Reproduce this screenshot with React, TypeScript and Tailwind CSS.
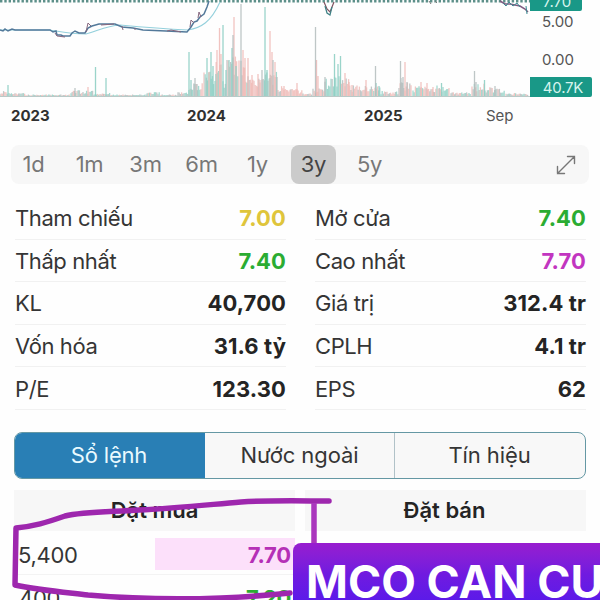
const TEAL = "#8fcfc4";
const ROSE = "#efb9b5";
const GREY = "#b3bcbc";

// [x, top] pairs of the tall volume bars, grouped by colour
const tealSpikes = [
  [8, 85], [95.5, 67], [106, 78], [189, 52], [191, 80], [207, 58], [211, 52], [213, 66], [216, 74], [223, 25],
  [226, 70], [229, 60], [232, 48], [236, 66], [265, 7], [267, 70], [270, 78], [334.5, 54], [338, 64], [340.5, 56],
  [376, 83], [379, 86], [441.5, 83], [484.5, 80],
];
const roseSpikes = [
  [88, 87], [209, 72], [217, 50], [219.5, 28], [221, 54], [234, 17], [243, 50], [245, 58], [248, 58], [252, 75],
  [258, 74], [260, 80], [270, 31], [272, 52], [275, 62], [284, 86], [297, 83], [316.5, 60], [318, 76], [345, 73],
  [349, 82], [352, 85], [366, 80], [366, 88], [421, 82], [427, 83], [433, 87], [405, 62],
];
const greySpikes = [
  [75, 88], [195, 78], [197, 84], [241, 4], [233, 35], [262, 70], [273, 60], [277, 77], [315.5, 27], [325, 77],
  [375.5, 66], [400.5, 61], [401, 78], [403, 77], [474.5, 71], [476, 82], [495, 86], [407, 82],
];

// lower volume: [from, to, height]
const ranges: [number, number, number][] = [
  [0, 8, 5], [9, 25, 3], [26, 70, 1.5], [71, 93, 6], [94, 110, 3], [111, 145, 1.5], [146, 160, 4], [161, 177, 1.5],
  [178, 188, 4], [189, 203, 13], [204, 214, 32], [215, 222, 38], [223, 226, 20], [227, 240, 46], [241, 247, 36],
  [248, 261, 20], [262, 277, 26], [278, 290, 11], [291, 302, 7], [303, 312, 3], [313, 324, 8], [325, 338, 20],
  [339, 350, 22], [351, 368, 11], [369, 380, 10], [381, 398, 5], [399, 412, 14], [413, 450, 11],
  [451, 471, 4], [472, 484, 13], [485, 505, 9], [506, 528, 3],
];

const noise = (x: number) => {
  const s = Math.sin(x * 12.9898) * 43758.5453;
  return s - Math.floor(s);
};

// the early 2024 rally is mostly green volume, what follows is mostly red
const tint = (x: number) => {
  const n = noise(x * 3.1);
  if (x > 203 && x < 241) return n < 0.65 ? TEAL : n < 0.85 ? GREY : ROSE;
  if ((x > 247 && x < 262) || (x > 277 && x < 325) || (x > 340 && x < 368)) return n < 0.7 ? ROSE : GREY;
  if (x > 324 && x < 341) return n < 0.7 ? TEAL : GREY;
  return [TEAL, ROSE, GREY][Math.floor(n * 3)];
};

const lowBars = ranges.flatMap(([from, to, h], i) => {
  const bars = [];
  for (let x = from; x <= to; x += 1.2) {
    bars.push({ x, h: h * (0.35 + 0.65 * noise(x + i)), color: tint(x) });
  }
  return bars;
});

const spikePath = (list: number[][]) => list.map(([x, y]) => `M${x} 96V${y}`).join("");

const PriceChart = () => (
  <svg width="530" height="98" viewBox="0 0 530 98" fill="none" className="block shrink-0">
    {lowBars.map((b, i) => (
      <path key={i} d={`M${b.x} 96v${-b.h}`} stroke={b.color} strokeWidth="1.3" opacity="0.8" />
    ))}
    <path d={spikePath(tealSpikes)} stroke={TEAL} strokeWidth="1.3" opacity="0.9" />
    <path d={spikePath(roseSpikes)} stroke={ROSE} strokeWidth="1.3" opacity="0.85" />
    <path d={spikePath(greySpikes)} stroke={GREY} strokeWidth="1.3" opacity="0.85" />
    <path d="M0 96.5H530" stroke="#b9c9c7" />
    <path d="M0 1.2H530" stroke="#5c8f89" strokeWidth="2.4" strokeDasharray="2.4 1.9" />
    <path
      d="M0 30L50 30C62 32 70 34 86 34C98 31 105 26 120 25C142 27 168 29 188 30C201 28 211 22 220 2"
      stroke="#94d0dc"
      strokeWidth="1.1"
    />
    <path
      d="M0 30L3 31L5 29L8 31L12 29L15 30L50 30L53 32L56 31L57 35L61 35L63 36L70 36L72 33L75 31L79 33L85 33L88 28L92 26L99 24L115 24L122 27L133 28L143 30L166 31L187 32L191 27L194 22L197 21L200 17L204 14L207 7L209 1"
      stroke="#53799a"
      strokeWidth="1.5"
    />
    <path
      d="M55 33L57 36L65 37M86 32L88 23L91 26M101 25L114 24M122 26L123 30M135 28V30M167 31L171 30L181 32M190 27L191 20L194 23M198 18L199 12L201 17"
      stroke="#86677e"
    />
    <path d="M324 2L327 9L330 12L334 2" stroke="#80525f" strokeWidth="1.2" />
    <path d="M325 6L327 13L330 15L332 7" stroke="#3d8084" strokeWidth="1.2" />
    <path d="M429 1L431 4M435 1L437 3" stroke="#777" />
    <path d="M500 1L505 4L510 4L515 5L520 6L525 9L528 12" stroke="#825a80" strokeWidth="1.5" />
    <path d="M503 3L506 6L509 2L513 6L517 3L520 7M526 6L527 14" stroke="#3b8a92" />
  </svg>
);

const ExpandIcon = () => (
  <svg width="20" height="20" viewBox="0 0 20 20" fill="none" stroke="#777" strokeWidth="1.4" strokeLinecap="round">
    <path d="M1.5 18.5L18.5 1.5M11.5 1.5H18.5V8.5M1.5 11.5V18.5H8.5" />
  </svg>
);

const periods = [
  { label: "1d", box: "w-[44px]" },
  { label: "1m", box: "w-[68px]" },
  { label: "3m", box: "w-[44px]" },
  { label: "6m", box: "w-[68px]" },
  { label: "1y", box: "w-[44px]" },
];

type Stat = { label: string; value: string; color?: string };

const left: Stat[] = [
  { label: "Tham chiếu", value: "7.00", color: "text-[#dfc53b]" },
  { label: "Thấp nhất", value: "7.40", color: "text-[#2bac32]" },
  { label: "KL", value: "40,700" },
  { label: "Vốn hóa", value: "31.6 tỷ" },
  { label: "P/E", value: "123.30" },
];

const right: Stat[] = [
  { label: "Mở cửa", value: "7.40", color: "text-[#2bac32]" },
  { label: "Cao nhất", value: "7.70", color: "text-[#c235c0]" },
  { label: "Giá trị", value: "312.4 tr" },
  { label: "CPLH", value: "4.1 tr" },
  { label: "EPS", value: "62" },
];

const StatColumn = ({ stats }: { stats: Stat[] }) => (
  <div className="flex flex-col">
    {stats.map((s) => (
      <div
        key={s.label}
        className="flex h-[42.6px] items-center justify-between border-b border-[#f1f1f1] pt-[2px] text-[22px] text-[#353535]"
      >
        <span className="tracking-[-0.4px]">{s.label}</span>
        <span className={`font-bold tracking-[0.1px] ${s.color ?? "text-[#242424]"}`}>{s.value}</span>
      </div>
    ))}
  </div>
);

export default function App() {
  return (
    <div className="relative h-[600px] w-[600px] overflow-hidden bg-[#fefefe] font-['Inter','Liberation_Sans',sans-serif] text-[#353535]">
      <div className="flex h-[98px]">
        <PriceChart />
        <div className="flex w-[70px] flex-col items-start text-[15px] leading-[20px] text-[#555]">
          <div className="flex h-[11px] w-[52px] items-end justify-center rounded-br-xs bg-[#199887] pl-[2px] leading-[18px] text-[#d5f4ee]">
            <span>7.70</span>
          </div>
          <span className="mt-[1px] ml-[12px]">5.00</span>
          <span className="mt-[18px] ml-[12px]">0.00</span>
          <div className="mt-[7px] flex h-[20px] w-[62px] items-center justify-center rounded-r-xs bg-[#199887] pt-[2px] pl-1 tracking-[-0.2px] text-[#d5f4ee]">
            40.7K
          </div>
        </div>
      </div>

      <div className="flex h-[47px] pt-[8px] text-[15px] leading-5 font-bold text-[#303030]">
        <span className="ml-[11px] w-[176px]">2023</span>
        <span className="w-[177px]">2024</span>
        <span className="w-[122px]">2025</span>
        <span className="font-normal text-[#555]">Sep</span>
      </div>

      <div className="mx-[11px] flex h-[39px] items-center rounded-lg bg-[#f7f7f7] text-[22px] tracking-[-0.3px] text-[#777]">
        {periods.map((p) => (
          <span key={p.label} className={`pl-px text-center ${p.box}`}>
            {p.label}
          </span>
        ))}
        <span className="ml-[12px] flex h-full w-[45px] items-center justify-center rounded-lg bg-[#cbcbcb] text-[#444]">
          3y
        </span>
        <span className="ml-[21px]">5y</span>
        <span className="mr-[13px] ml-auto">
          <ExpandIcon />
        </span>
      </div>

      <div className="grid grid-cols-2 gap-x-[29px] pt-[13px] pr-[14px] pl-[15px]">
        <StatColumn stats={left} />
        <StatColumn stats={right} />
      </div>

      <div className="mt-[22px] ml-[14px] flex h-[47px] w-[572px] overflow-hidden rounded-lg border border-[#6598a4] bg-[#f8f8f8] text-[22px] tracking-[-0.1px]">
        <div className="flex w-[190px] items-center justify-center bg-[#297fb5] pr-[2px] tracking-[-0.2px] text-[#e9faff]">
          Sổ lệnh
        </div>
        <div className="flex w-[190px] items-center justify-center border-r border-[#b1c2c8]">Nước ngoài</div>
        <div className="flex flex-1 items-center justify-center pr-px">Tín hiệu</div>
      </div>

      <div className="mt-[11px] flex gap-[10px] px-[14px]">
        <div className="w-[281px]">
          <div className="flex h-[41px] items-center justify-center bg-[#f7f7f7] text-[22px] font-semibold text-[#242424]">
            Đặt mua
          </div>
          <div className="flex h-[44px] items-center justify-between border-b border-[#f3f3f3] text-[22px]">
            <span className="pt-[6px] pl-[4px] tracking-[-0.3px]">5,400</span>
            <span className="mt-[4px] flex h-[32px] w-[140px] items-center justify-end bg-[#fce0fa] pt-[2px] pr-[4px] font-bold tracking-[-0.2px] text-[#b52fb6]">
              7.70
            </span>
          </div>
          <div className="flex h-[42px] items-center justify-between pt-[5px] pr-[4px] pl-[5px] text-[22px] tracking-[-0.3px]">
            <span>400</span>
            <span className="font-bold text-[#2bac32]">7.20</span>
          </div>
        </div>
        <div className="w-[281px]">
          <div className="flex h-[41px] items-center justify-center bg-[#f7f7f7] pr-[2px] text-[22px] font-semibold text-[#242424]">
            Đặt bán
          </div>
        </div>
      </div>

      {/* pen stroke circling the best bid */}
      <svg className="absolute inset-0" width="600" height="600" viewBox="0 0 600 600" fill="none">
        <path
          d="M329 501C305 501 270 500 241 502C205 505 176 508 139 510C108 512 82 512 65 516C45 523 35 526 16 528L15 585C38 590 62 592 88 595C123 598 170 600 221 598C246 597 270 595 290 593"
          stroke="#9e27ae"
          strokeWidth="5.5"
          strokeLinecap="round"
          strokeLinejoin="round"
        />
        <path d="M314 503V545" stroke="#aa36bd" strokeWidth="5.5" />
      </svg>
      <div className="absolute top-[543px] left-[293px] h-[70px] w-[320px] rounded-tl-lg bg-linear-to-b from-[#981ccf] via-[#701ae0] via-45% to-[#5118ed] pt-[15px] pl-[13px] text-[45px] leading-[48px] font-bold whitespace-nowrap text-white">
        MCO CAN CU
      </div>
    </div>
  );
}
